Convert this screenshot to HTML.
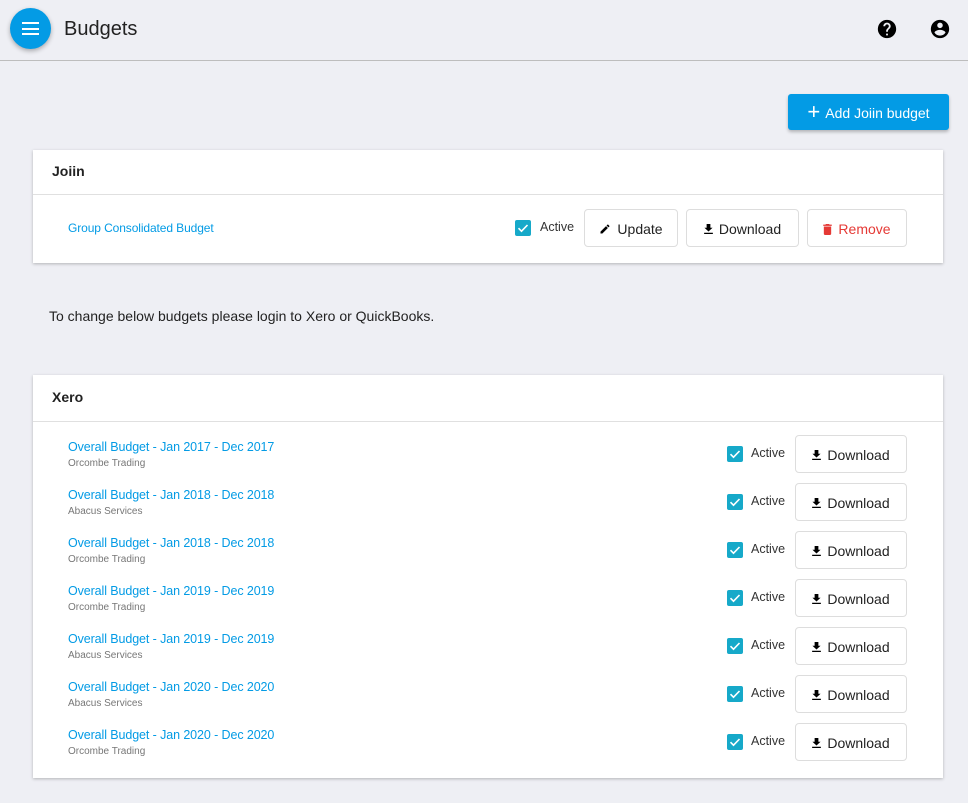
<!DOCTYPE html>
<html><head><style>
*{box-sizing:border-box;margin:0;padding:0}
body{width:968px;height:803px;background:#eeeff4;font-family:"Liberation Sans",Roboto,sans-serif;position:relative;overflow:hidden;color:#222}
.abs{position:absolute}
.hdr{left:0;top:0;width:968px;height:61px;border-bottom:1px solid #bdbdbd}
.fab{left:10px;top:8px;width:41px;height:41px;border-radius:50%;background:#039be5;box-shadow:0 2px 5px rgba(0,0,0,.3)}
.fab i{position:absolute;left:12px;width:17px;height:2px;background:#fff}
.card{left:33px;width:910px;background:#fff;box-shadow:0 1px 3px rgba(0,0,0,.25)}
.ch{height:45px;border-bottom:1px solid #e0e0e0;font-weight:bold;font-size:14px;padding:13px 0 0 19px;color:#222}
.btn{position:absolute;height:38px;border:1px solid #ddd;border-radius:4px;background:#fff;font-size:14px;display:flex;align-items:center;justify-content:center;gap:6px;color:#222;padding-top:2px}
.cb{position:absolute;width:16px;height:16px;background:#16a9c9;border-radius:2px}
.cb svg{display:block}
.act{position:absolute;font-size:12.5px;color:#333}
.t{position:absolute;left:35px;font-size:12.5px;color:#039be5;letter-spacing:-0.1px}
.s{position:absolute;left:35px;font-size:10px;color:#777}
</style></head><body>
<div class="abs hdr"></div>
<div class="abs fab"><i style="top:14px"></i><i style="top:19.5px"></i><i style="top:25px"></i></div>
<div class="abs" style="left:64px;top:18px;font-size:20px;color:#222">Budgets</div>
<svg class="abs" style="left:876px;top:18px" width="22" height="22" viewBox="0 0 24 24"><path d="M12 2a10 10 0 100 20 10 10 0 000-20zm1 17h-2v-2h2v2zm2.07-7.75l-.9.92C13.45 12.9 13 13.5 13 15h-2v-.5c0-1.1.45-2.1 1.17-2.83l1.24-1.26A2 2 0 1010 9H8a4 4 0 118 0c0 .88-.36 1.68-.93 2.25z"/></svg>
<svg class="abs" style="left:929px;top:18px" width="22" height="22" viewBox="0 0 24 24"><path d="M12 2a10 10 0 100 20 10 10 0 000-20zm0 3a3 3 0 110 6 3 3 0 010-6zm0 14.2a7.2 7.2 0 01-6-3.22c.03-1.99 4-3.08 6-3.08s5.97 1.09 6 3.08a7.2 7.2 0 01-6 3.22z"/></svg>
<div class="abs" style="left:788px;top:94px;width:161px;height:36px;background:#039be5;border-radius:3px;box-shadow:0 2px 3px rgba(0,0,0,.25);color:#fff;font-size:14px;display:flex;align-items:center;justify-content:center;gap:5px;padding-top:2px"><span style="font-size:22px;font-weight:300;line-height:1;margin-top:-2px">+</span>Add Joiin budget</div>

<div class="abs card" style="top:150px;height:113px">
<div class="ch">Joiin</div>
<div class="t" style="top:71px;font-size:12px">Group Consolidated Budget</div>
<div class="cb" style="left:482px;top:70px"><svg width="16" height="16" viewBox="0 0 16 16"><path d="M3.5 8.2l3 3 6-6.2" stroke="#fff" stroke-width="1.6" fill="none"/></svg></div>
<div class="act" style="left:507px;top:70px">Active</div>
<div class="btn" style="left:551px;top:59px;width:94px"><svg width="12" height="12" viewBox="0 0 24 24"><path d="M3 17.25V21h3.75L17.8 9.94l-3.75-3.75L3 17.25zM20.7 7.04a1 1 0 000-1.41l-2.34-2.34a1 1 0 00-1.41 0l-1.83 1.83 3.75 3.75 1.83-1.83z"/></svg>Update</div>
<div class="btn" style="left:653px;top:59px;width:113px"><svg width="9" height="10" viewBox="0 0 14 16"><path d="M4 0h6v6h3.5L7 12 .5 6H4zM0 14h14v2H0z"/></svg>Download</div>
<div class="btn" style="left:774px;top:59px;width:100px;color:#e53935"><svg width="9" height="11" viewBox="0 0 14 18"><path d="M1 16c0 1.1.9 2 2 2h8c1.1 0 2-.9 2-2V4H1v12zM14 1h-3.5l-1-1h-5l-1 1H0v2h14z" fill="#e53935"/></svg>Remove</div>
</div>

<div class="abs" style="left:49px;top:308px;font-size:14px;color:#222">To change below budgets please login to Xero or QuickBooks.</div>

<div class="abs card" style="top:375px;height:403px">
<div class="ch" style="height:47px;padding-top:14px">Xero</div>
</div>
<div id="rows"></div>
<script>
var d=[["2017","Orcombe Trading"],["2018","Abacus Services"],["2018","Orcombe Trading"],["2019","Orcombe Trading"],["2019","Abacus Services"],["2020","Abacus Services"],["2020","Orcombe Trading"]];
var h="";d.forEach(function(r,i){var y=435+i*48;
h+='<div class="t" style="left:68px;top:'+(y+5)+'px">Overall Budget - Jan '+r[0]+' - Dec '+r[0]+'</div>';
h+='<div class="s" style="left:68px;top:'+(y+23)+'px">'+r[1]+'</div>';
h+='<div class="cb" style="left:727px;top:'+(y+11)+'px"><svg width="16" height="16" viewBox="0 0 16 16"><path d="M3.5 8.2l3 3 6-6.2" stroke="#fff" stroke-width="1.6" fill="none"/></svg></div>';
h+='<div class="act" style="left:751px;top:'+(y+11)+'px">Active</div>';
h+='<div class="btn" style="left:795px;top:'+y+'px;width:112px"><svg width="9" height="10" viewBox="0 0 14 16"><path d="M4 0h6v6h3.5L7 12 .5 6H4zM0 14h14v2H0z"/></svg>Download</div>';});
document.getElementById("rows").innerHTML=h;
</script>
</body></html>
